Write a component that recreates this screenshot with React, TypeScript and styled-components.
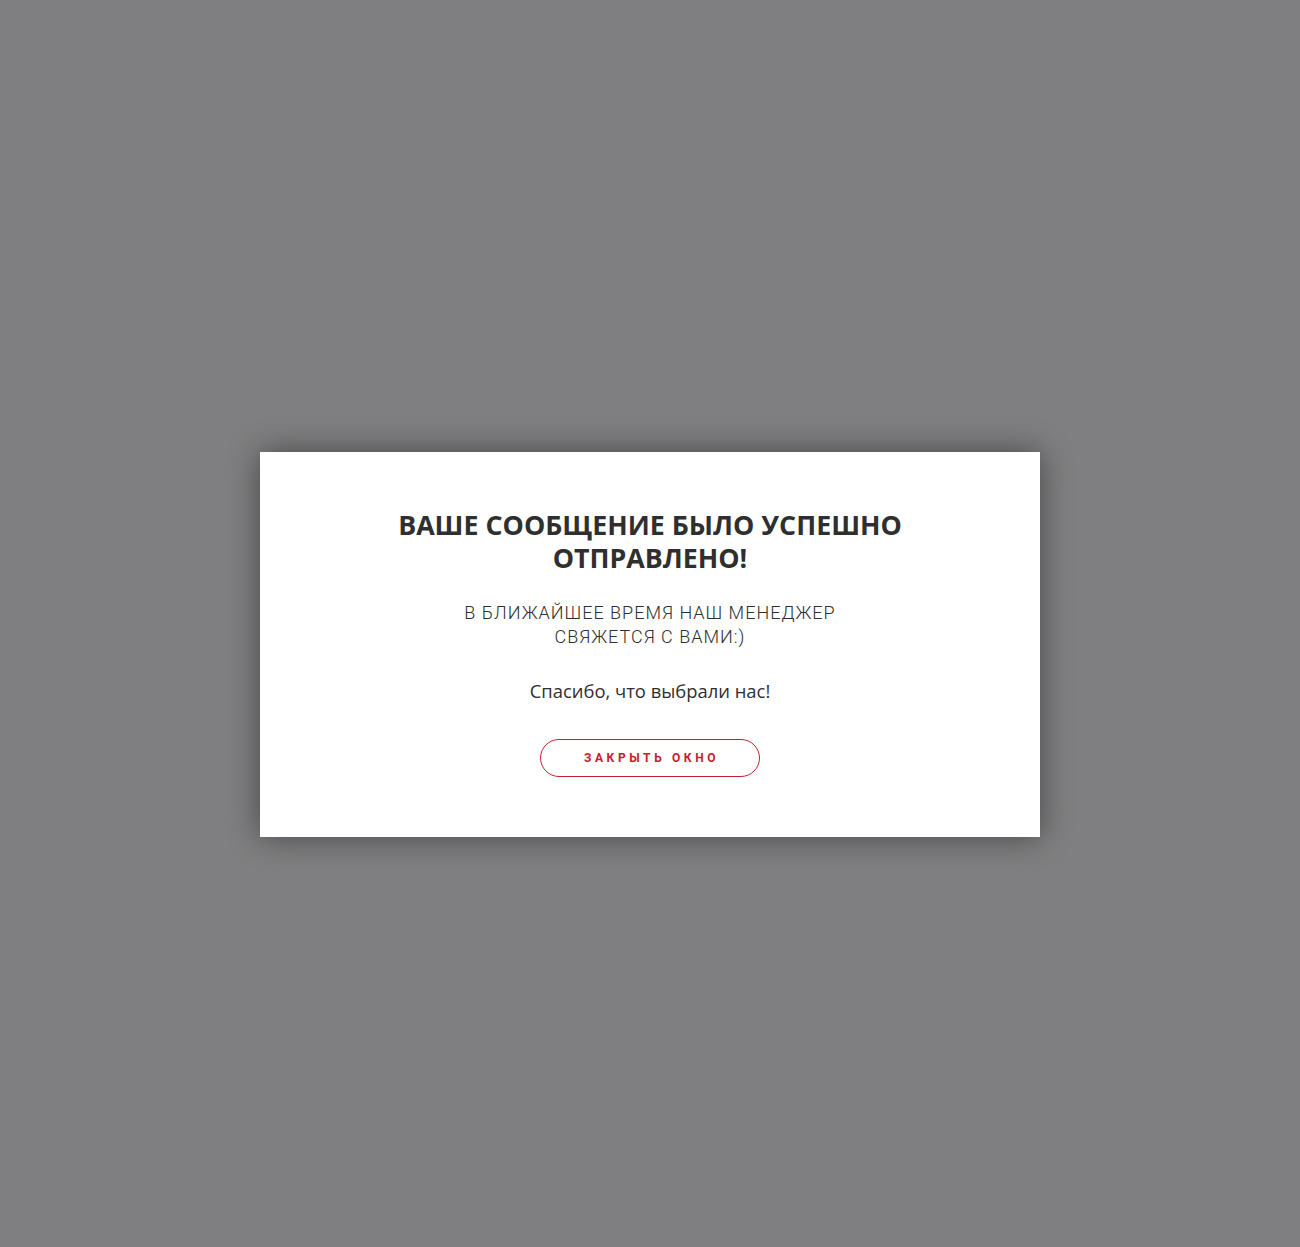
import React from "react";
import styled, { createGlobalStyle } from "styled-components";

const Global = createGlobalStyle`
  html, body { margin: 0; padding: 0; }
  body { background: #7f7f81; font-family: "Roboto", "Liberation Sans", sans-serif; }
`;

const Overlay = styled.div`
  min-height: 1247px;
  box-sizing: border-box;
  padding-top: 452px;
  display: flex;
  justify-content: center;
  align-items: flex-start;
`;

const Modal = styled.div`
  width: 780px;
  height: 385px;
  box-sizing: border-box;
  background: #ffffff;
  box-shadow: 0 0 30px rgba(0, 0, 0, 0.45);
  padding-top: 56px;
  display: flex;
  flex-direction: column;
  align-items: center;
  text-align: center;
  color: #2f2f2f;
`;

const Title = styled.h2`
  margin: 0;
  font-family: "Open Sans", "Liberation Sans", sans-serif;
  font-weight: 700;
  font-size: 26.8px;
  line-height: 33px;
  color: #2f2f2f;
  text-transform: uppercase;
`;

const Subtitle = styled.p`
  margin: 27px 0 0;
  font-family: "Roboto", "Liberation Sans", sans-serif;
  font-weight: 300;
  font-size: 18px;
  line-height: 24px;
  letter-spacing: 1px;
  color: #2f2f2f;
  text-transform: uppercase;
`;

const Thanks = styled.p`
  margin: 30px 0 0;
  font-family: "Open Sans", "Liberation Sans", sans-serif;
  font-weight: 400;
  font-size: 18.4px;
  line-height: 24px;
  color: #2f2f2f;
`;

const CloseButton = styled.button`
  margin-top: 36px;
  width: 220px;
  height: 38px;
  box-sizing: border-box;
  border: 1px solid #c8202a;
  border-radius: 19px;
  background: #ffffff;
  color: #c8202a;
  font-family: "Roboto", "Liberation Sans", sans-serif;
  font-weight: 700;
  font-size: 12px;
  letter-spacing: 3.6px;
  text-transform: uppercase;
  cursor: pointer;
  padding: 0 0 0 3px;
`;

export default function App() {
  return (
    <>
      <Global />
      <Overlay>
        <Modal>
          <Title>
            Ваше сообщение было успешно
            <br />
            отправлено!
          </Title>
          <Subtitle>
            В ближайшее время наш менеджер
            <br />
            свяжется с вами:)
          </Subtitle>
          <Thanks>Спасибо, что выбрали нас!</Thanks>
          <CloseButton>Закрыть окно</CloseButton>
        </Modal>
      </Overlay>
    </>
  );
}
